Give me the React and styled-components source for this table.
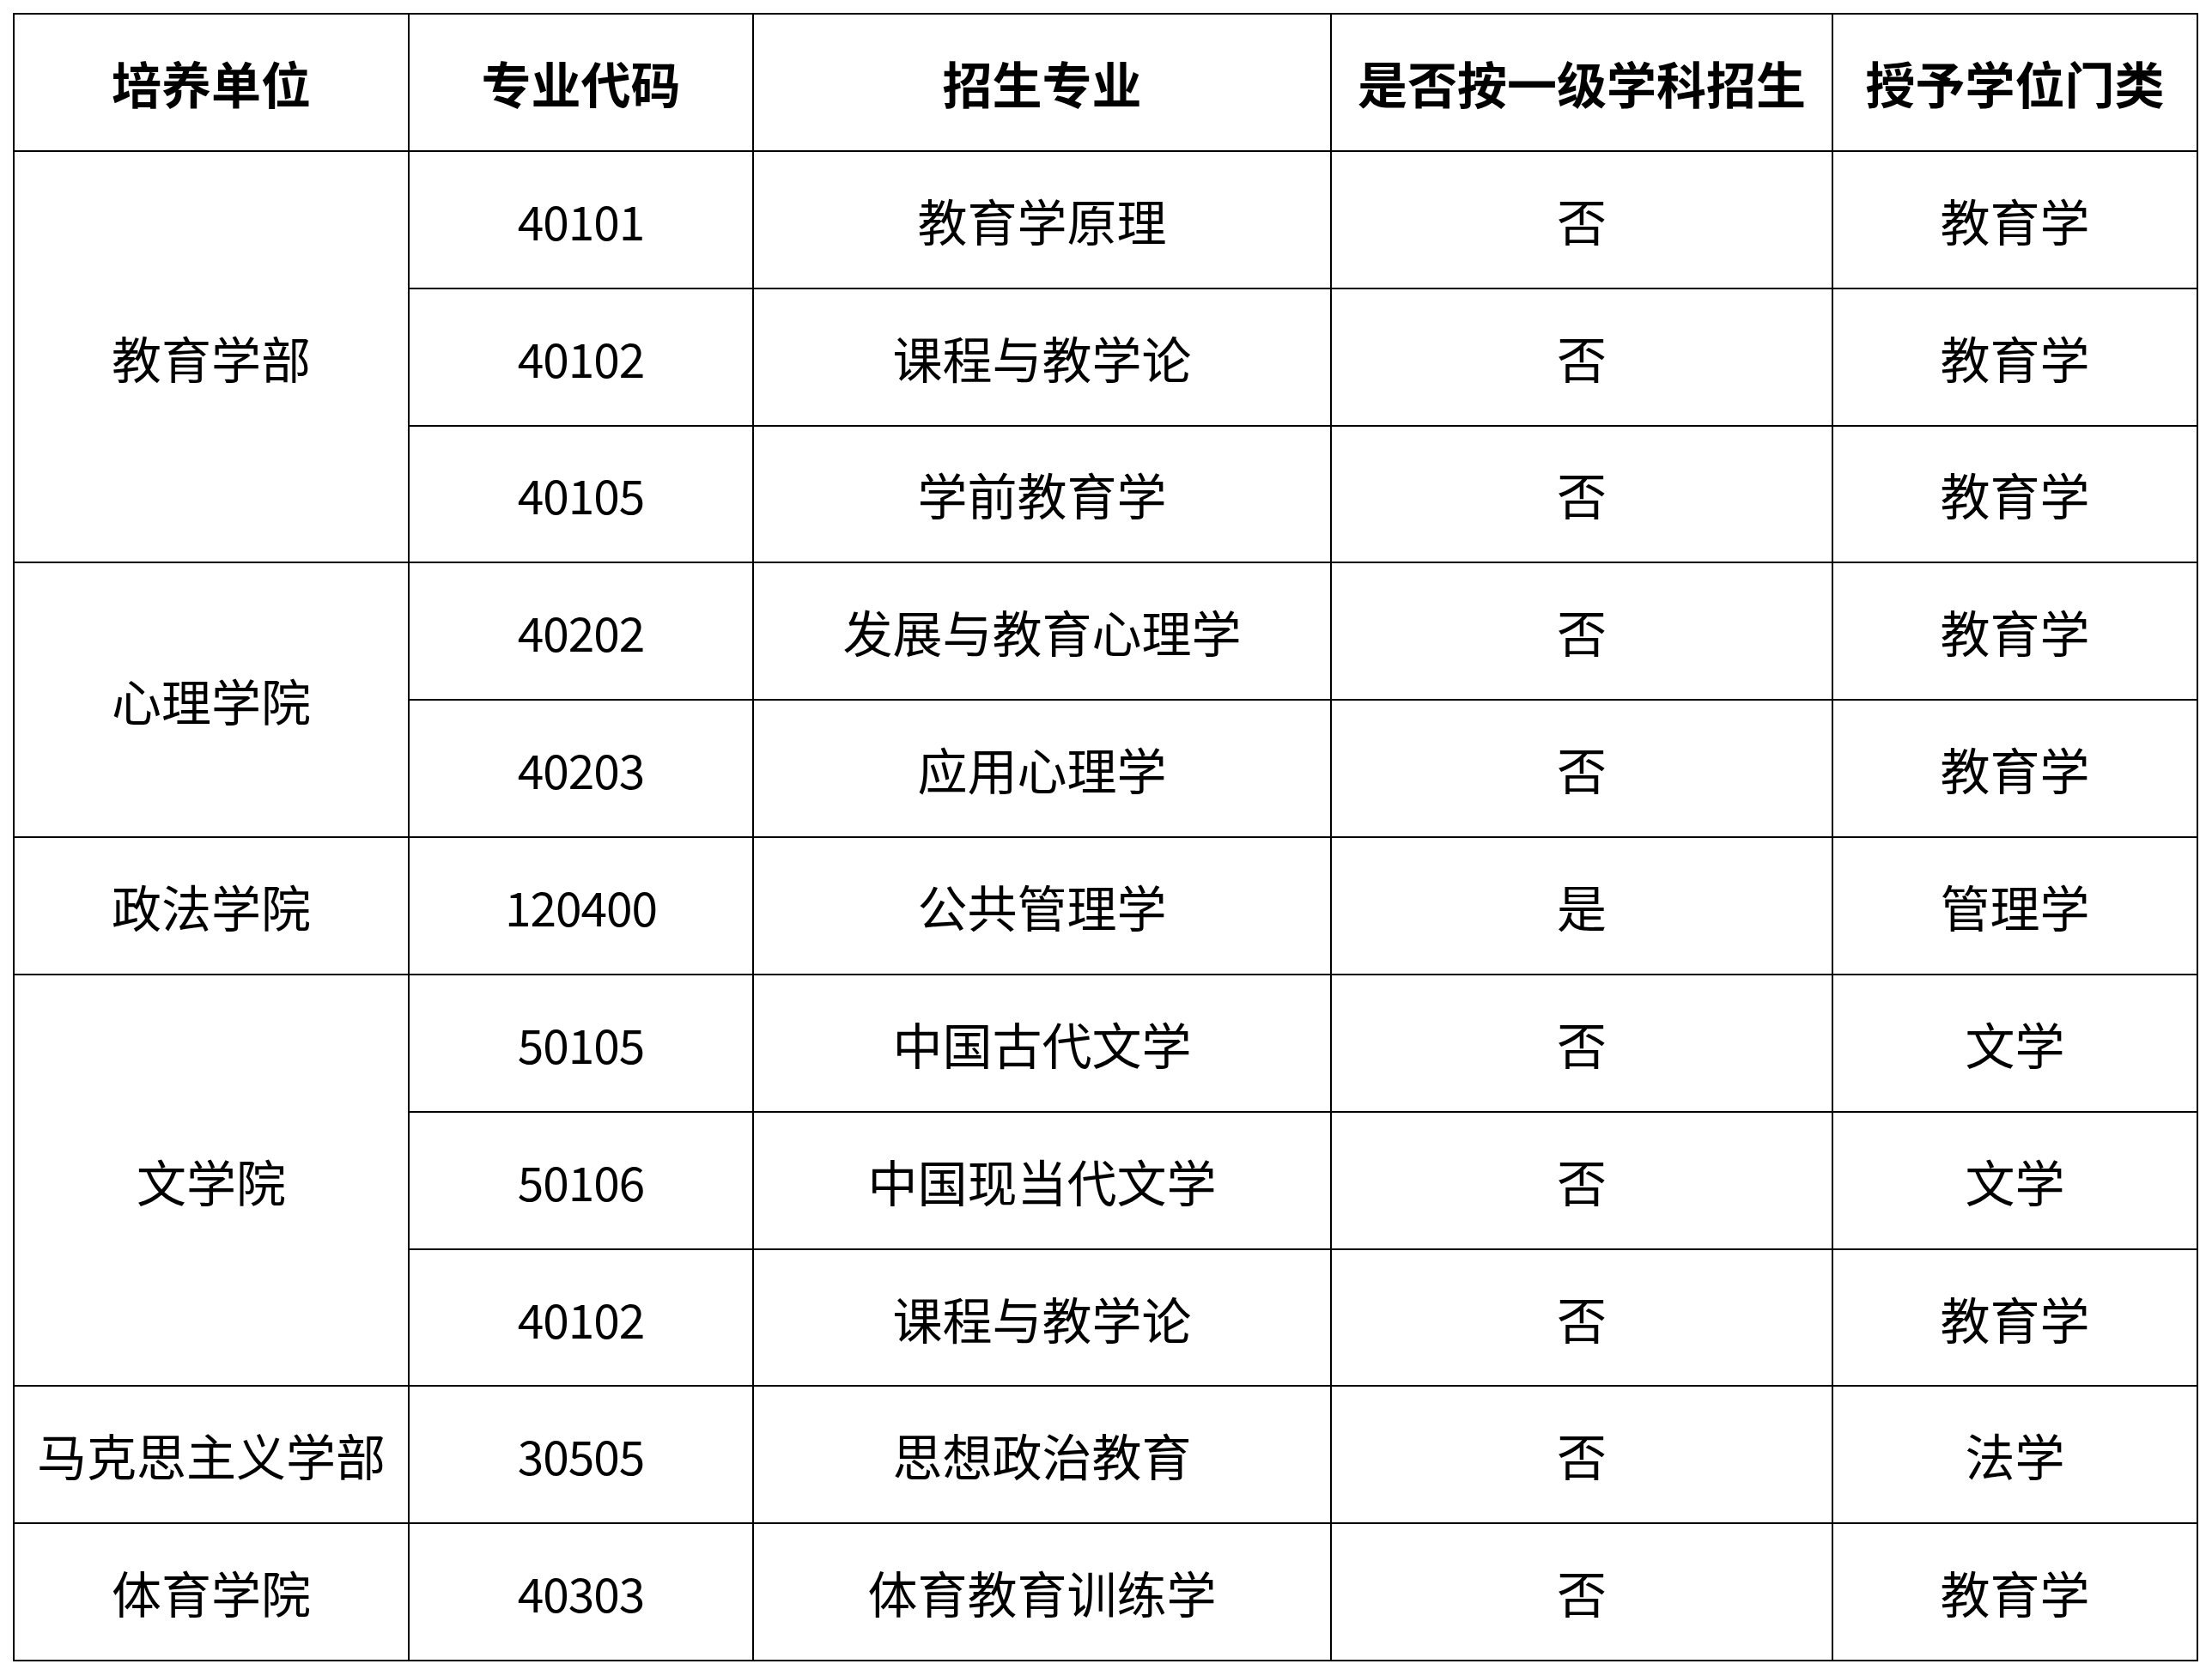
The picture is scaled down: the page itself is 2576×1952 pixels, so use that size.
import styled, { createGlobalStyle } from 'styled-components';

const HEADERS = ['培养单位', '专业代码', '招生专业', '是否按一级学科招生', '授予学位门类'];

const GROUPS = [
  {
    unit: '教育学部',
    rows: [
      ['40101', '教育学原理', '否', '教育学'],
      ['40102', '课程与教学论', '否', '教育学'],
      ['40105', '学前教育学', '否', '教育学'],
    ],
  },
  {
    unit: '心理学院',
    rows: [
      ['40202', '发展与教育心理学', '否', '教育学'],
      ['40203', '应用心理学', '否', '教育学'],
    ],
  },
  {
    unit: '政法学院',
    rows: [['120400', '公共管理学', '是', '管理学']],
  },
  {
    unit: '文学院',
    rows: [
      ['50105', '中国古代文学', '否', '文学'],
      ['50106', '中国现当代文学', '否', '文学'],
      ['40102', '课程与教学论', '否', '教育学'],
    ],
  },
  {
    unit: '马克思主义学部',
    rows: [['30505', '思想政治教育', '否', '法学']],
  },
  {
    unit: '体育学院',
    rows: [['40303', '体育教育训练学', '否', '教育学']],
  },
];

function App() {
  return (
    <Page>
      <GlobalStyle />
      <Table>
        {HEADERS.map((h) => (
          <Head key={h}>{h}</Head>
        ))}
        {GROUPS.map((group) => [
          <Cell key={group.unit} $span={group.rows.length}>
            {group.unit}
          </Cell>,
          ...group.rows.map((row, i) =>
            row.map((value, j) =>
              j === 0 ? (
                <CodeCell key={`${group.unit}-${i}-${j}`}>{value}</CodeCell>
              ) : (
                <Cell key={`${group.unit}-${i}-${j}`}>{value}</Cell>
              )
            )
          ),
        ])}
      </Table>
    </Page>
  );
}
export default App;

const GlobalStyle = createGlobalStyle`
  html, body {
    margin: 0;
    padding: 0;
    background: #fff;
  }
  body {
    font-family: "Noto Sans CJK SC", "Noto Sans", sans-serif;
    color: #000;
  }
`;

const Page = styled.div`
  padding: 15px 0 0 15px;
`;

const Table = styled.div`
  display: grid;
  width: 2545px;
  grid-template-columns: 460px 401px 673px 584px 425px;
  grid-template-rows: repeat(12, 159.85px);
  border-left: 2px solid #000;
  border-top: 2px solid #000;
  box-sizing: border-box;
`;

const Cell = styled.div`
  display: flex;
  align-items: center;
  justify-content: center;
  box-sizing: border-box;
  border-right: 2px solid #000;
  border-bottom: 2px solid #000;
  grid-row: ${({$span}) => ($span ? `span ${$span}` : 'auto')};
  font-size: 58px;
  font-weight: 400;
  white-space: nowrap;
`;

const CodeCell = styled(Cell)`
  font-size: 55px;
  letter-spacing: -1px;
`;

const Head = styled(Cell)`
  font-weight: 700;
`;
